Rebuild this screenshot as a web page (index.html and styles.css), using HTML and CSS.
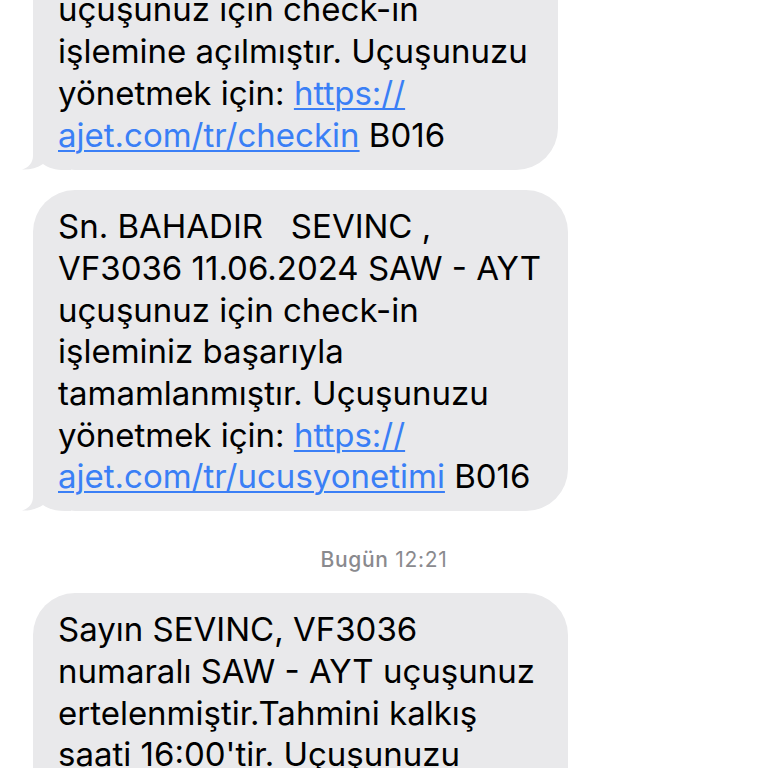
FILE: index.html
```html
<!DOCTYPE html>
<html lang="tr">
<head>
<meta charset="utf-8">
<title>Mesajlar</title>
<link rel="stylesheet" href="styles.css">
</head>
<body>
<div class="thread">
  <div class="bubble bubble-first">
    <svg class="tail" width="50" height="44" viewBox="0 0 50 44"><path d="M12 0 L50 0 L50 44 L44 44 C34 44 28 42 22 38 C16 42 8 44 1 43.5 C7 42 12 37 12 30 Z"/></svg>
    <p class="msg"><span class="ln">Sn. BAHADIR   SEVINC ,</span><span class="ln">VF3036 11.06.2024 SAW - AYT</span><span class="ln">uçuşunuz için check-in</span><span class="ln">işlemine açılmıştır. Uçuşunuzu</span><span class="ln">yönetmek için: <a class="link">https://</a></span><span class="ln"><a class="link">ajet.com/tr/checkin</a> B016</span></p>
  </div>
  <div class="bubble bubble-wide">
    <svg class="tail" width="50" height="44" viewBox="0 0 50 44"><path d="M12 0 L50 0 L50 44 L44 44 C34 44 28 42 22 38 C16 42 8 44 1 43.5 C7 42 12 37 12 30 Z"/></svg>
    <p class="msg"><span class="ln">Sn. BAHADIR   SEVINC ,</span><span class="ln">VF3036 11.06.2024 SAW - AYT</span><span class="ln">uçuşunuz için check-in</span><span class="ln">işleminiz başarıyla</span><span class="ln">tamamlanmıştır. Uçuşunuzu</span><span class="ln">yönetmek için: <a class="link">https://</a></span><span class="ln"><a class="link">ajet.com/tr/ucusyonetimi</a> B016</span></p>
  </div>
  <div class="stamp"><span class="day">Bugün</span> <span class="time">12:21</span></div>
  <div class="bubble bubble-wide">
    <p class="msg"><span class="ln">Sayın SEVINC, VF3036</span><span class="ln">numaralı SAW - AYT uçuşunuz</span><span class="ln">ertelenmiştir.Tahmini kalkış</span><span class="ln">saati <span class="detect">16:00</span>'tir. Uçuşunuzu</span><span class="ln">yönetmek için: <a class="link">https://</a></span><span class="ln"><a class="link">ajet.com/tr/ucusyonetimi</a> B016</span></p>
  </div>
</div>
</body>
</html>
```
FILE: styles.css
```css
html, body {
  margin: 0;
  padding: 0;
  background: #ffffff;
}
body {
  width: 768px;
  height: 768px;
  overflow: hidden;
  font-family: Inter, "Noto Sans", "DejaVu Sans", sans-serif;
}
.thread {
  display: flex;
  flex-direction: column;
  align-items: flex-start;
  padding-left: 33px;
  margin-top: -110px;
}
.bubble {
  position: relative;
  box-sizing: border-box;
  background: #e9e9eb;
  border-radius: 42px;
  padding: 16px 20px 13px 25px;
}
.bubble-first { width: 525px; padding-bottom: 14px; }
.bubble-wide { width: 535px; margin-top: 20px; }
.msg {
  position: relative;
  z-index: 1;
  margin: 0;
  font-size: 33px;
  line-height: 41.7px;
  color: #000000;
}
.ln {
  display: block;
  white-space: pre;
}
.link {
  color: #3a7ff6;
  text-decoration: underline;
  text-decoration-thickness: 2px;
  text-underline-offset: 3px;
}
.detect {
  text-decoration: underline;
  text-decoration-color: #6e6e72;
  text-decoration-thickness: 1px;
  text-underline-offset: 4px;
}
.tail {
  position: absolute;
  left: -12px;
  bottom: 0;
  fill: #e9e9eb;
  z-index: 0;
}
.stamp {
  align-self: center;
  margin: 37px 0 0 -33px;
  height: 24px;
  line-height: 24px;
  font-size: 21px;
  letter-spacing: 0.7px;
  color: #8a8a8e;
}
.stamp .day { font-weight: 500; }
.stamp .time { font-weight: 400; }
.stamp + .bubble { margin-top: 21px; }
```
